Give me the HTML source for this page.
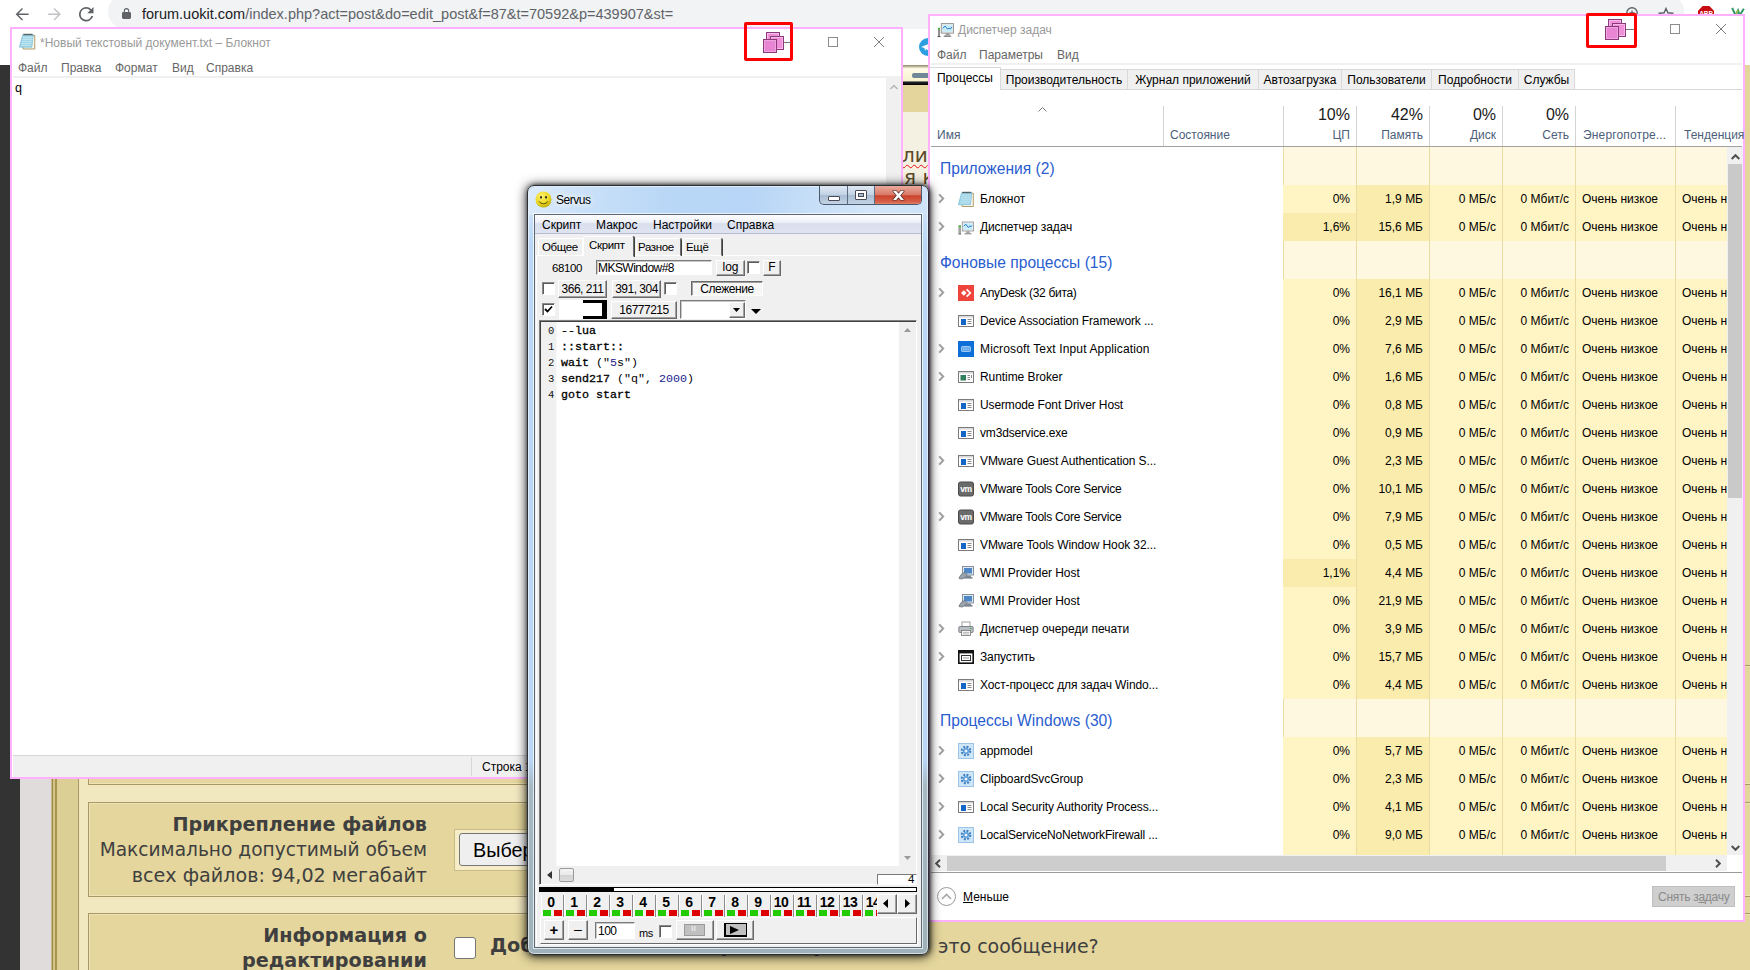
<!DOCTYPE html>
<html lang="ru"><head><meta charset="utf-8"><title>screenshot</title>
<style>
html,body{margin:0;padding:0}
body{width:1750px;height:970px;position:relative;overflow:hidden;background:#e3d59b;font-family:"Liberation Sans",sans-serif;font-size:12px;color:#000}
div,span,svg{position:absolute;box-sizing:border-box}
span{white-space:pre}
/* ---- chrome page ---- */
#ctb{left:0;top:0;width:1750px;height:65px;background:#fff}
#pill{left:108px;top:-6px;width:1576px;height:35px;border-radius:18px;background:#f1f3f4}
#url{left:142px;top:5px;font-size:14.5px;line-height:18px;color:#5f6368}
#url b{font-weight:normal;color:#202124}
#ldark{left:0;top:65px;width:20px;height:905px;background:#333}
#lgray{left:20px;top:65px;width:32px;height:905px;background:#e0dcdc}
#forum{left:52px;top:65px;width:1698px;height:905px;background:#e3d59b}
.fx{font-family:"DejaVu Sans","Liberation Sans",sans-serif;color:#3f3f3f}
.box{background:#e4d69c;border:1px solid #a89868;box-shadow:inset 0 0 0 1px #efe3b6}
/* ---- generic win10 window ---- */
.w10{background:#fff;border:2px solid #ffb1ff}
.w10 .ttl{font-size:12px;color:#999;line-height:14px}
.w10 .mi{font-size:12px;color:#666;line-height:14px}
/* ---- task manager ---- */
#tm .tab{top:53px;height:21px;border:1px solid #d9d9d9;border-left:none;background:#f0f0f0;font-size:12px;line-height:20px;text-align:center;color:#000}
#tm .hl{font-size:12px;line-height:14px;color:#4c607a}
#tm .hp{font-size:16px;line-height:18px;color:#1a1a1a;text-align:right}
#tm .vs{top:90px;width:1px;height:40px;background:#d4d4d4}
#list{left:0;top:131px;width:797px;height:708px;overflow:hidden;background:#fff}
#list .colbg{top:0;height:708px}
.row{left:0;width:797px;height:28px}
.grp{left:0;width:797px}
.grp span{left:10px;bottom:6px;font-size:15.600px;line-height:20px;color:#2a5dd0}
.row .chev{left:8px;top:8px;width:7px;height:11px}
.row .ic{left:28px;top:6px;width:16px;height:16px}
.row .nm{left:50px;top:7px;line-height:14px;font-size:12px}
.row .c{top:0;height:28px;line-height:28px;font-size:12px;text-align:right;padding-right:6px}
.row .cpu{left:353px;width:73px;background:#fff4c4}
.row .cpu.hot{background:#f9ecac}
.row .mem{left:427px;width:72px;background:#f9ecac}
.row .dsk{left:500px;width:72px;background:#fff4c4}
.row .net{left:573px;width:72px;background:#fff4c4}
.row .pw{left:646px;width:99px;background:#fff4c4;text-align:left;padding-left:6px}
.row .pt{left:746px;width:51px;background:#fff4c4;text-align:left;padding-left:6px}
/* ---- servus ---- */
#sv{font-family:"Liberation Sans",sans-serif;font-size:12px}
.btn{background:#f0f0f0;border:1px solid;border-color:#fff #6a6a6a #6a6a6a #fff;box-shadow:inset -1px -1px 0 #a0a0a0;text-align:center;font-size:12px;line-height:14px}
.cb{width:13px;height:13px;background:#fff;border:1px solid;border-color:#8a8a8a #fff #fff #8a8a8a;box-shadow:inset 1px 1px 0 #5a5a5a}
.edit{background:#fff;border:1px solid;border-color:#7a7a7a #fff #fff #7a7a7a;box-shadow:inset 1px 1px 0 #c8c8c8}
.code{font-family:"Liberation Mono",monospace;font-size:11.670px;line-height:15px;color:#000;-webkit-text-stroke:.3px #000}
.code em{font-style:normal;-webkit-text-stroke:0}
.code i{font-style:normal;color:#1a1a8c;-webkit-text-stroke:0}

</style></head>
<body>
<!-- ======== browser (background) ======== -->
<div id="ctb">
  <div id="pill"></div>
  <svg style="left:15px;top:7px;width:14.500px;height:14.500px" viewBox="0 0 16 16"><path d="M15 7.200H3.800l5-5L7.700 1 .7 8l7 7 1.100-1.100-5-5.100H15z" fill="#5f6368"/></svg>
  <svg style="left:47px;top:7px;width:14.500px;height:14.500px" viewBox="0 0 16 16"><path d="M1 7.200h11.200l-5-5L8.300 1l7 7-7 7-1.100-1.100 5-5.100H1z" fill="#c1c3c6"/></svg>
  <svg style="left:79px;top:7px;width:14.500px;height:14.500px" viewBox="0 0 16 16"><path d="M13.600 2.400A7.900 7.900 0 0 0 8 0a8 8 0 1 0 7.700 10h-2.100A6 6 0 1 1 8 2c1.700 0 3.100.7 4.200 1.800L9 7h7V0z" fill="#5f6368"/></svg>
  <svg style="left:121.500px;top:8px;width:9px;height:11px" viewBox="0 0 10 12"><path d="M8.500 4.200H8V3a3 3 0 0 0-6 0v1.200h-.5C.7 4.200 0 4.900 0 5.700v4.800C0 11.300.7 12 1.500 12h7c.8 0 1.500-.7 1.500-1.500V5.700c0-.8-.7-1.500-1.500-1.500zM3.200 3a1.800 1.800 0 0 1 3.600 0v1.200H3.200z" fill="#5f6368"/></svg>
  <span id="url"><b>forum.uokit.com</b>/index.php?act=post&amp;do=edit_post&amp;f=87&amp;t=70592&amp;p=439907&amp;st=</span>
  <svg style="left:1624px;top:5px;width:16px;height:16px" viewBox="0 0 16 16"><circle cx="8" cy="8" r="5.200" fill="none" stroke="#5f6368" stroke-width="1.400"/><path d="M5.500 8h5M8 5.500v5" stroke="#5f6368" stroke-width="1.300"/></svg>
  <svg style="left:1657px;top:6px;width:18px;height:18px" viewBox="0 0 18 18"><path d="M9 2.500l1.900 4.300 4.600.4-3.500 3 1.100 4.500L9 12.300l-4.100 2.400 1.100-4.500-3.500-3 4.600-.4z" fill="none" stroke="#5f6368" stroke-width="1.400"/></svg>
  <svg style="left:1698px;top:6px;width:16px;height:16px" viewBox="0 0 16 16"><path d="M4.700 0h6.600L16 4.700v6.600L11.300 16H4.700L0 11.300V4.700z" fill="#c70d12"/><text x="8" y="10" font-family="Liberation Sans,sans-serif" font-weight="bold" font-size="6.500" fill="#fff" text-anchor="middle">ABP</text></svg>
  <svg style="left:1731px;top:7px;width:14px;height:10px" viewBox="0 0 16 12"><path d="M1 1l4 9 3-6 2 6 5-8" fill="none" stroke="#2e9a63" stroke-width="2.400"/><path d="M5 10l3-6" stroke="#b3c23a" stroke-width="1.500"/></svg>
  <!-- telegram-ish circle in the gap -->
  <div style="left:919px;top:38px;width:18px;height:18px;border-radius:9px;background:#2b9fe0"></div>
  <svg style="left:921px;top:42px;width:10px;height:10px" viewBox="0 0 10 10"><path d="M0 5L10 1 8 9 5 7 4 9 3.500 6z" fill="#fff"/></svg>
</div>
<div id="ldark"></div>
<div id="lgray"></div>
<div style="left:51px;top:65px;width:1px;height:905px;background:#c4b88f"></div>
<div id="forum">
  <!-- left frame -->
  <div style="left:0;top:0;width:5px;height:905px;background:linear-gradient(90deg,#a08a40 0,#a08a40 1px,#d2c488 1px,#d2c488 3px,#a8954e 3px,#a8954e 5px)"></div>
  <div style="left:5px;top:0;width:21px;height:905px;background:#dccf96"></div>
  <div style="left:26px;top:0;width:1px;height:905px;background:#a89868"></div>
  <div style="left:27px;top:0;width:1671px;height:905px;background:#f2e8c0"></div>
  <!-- gap strip between windows (x 903..928) -->
  <div style="left:840px;top:0;width:50px;height:47px;background:#e3d59b"></div>
  <div style="left:851px;top:0;width:30px;height:20px;background:linear-gradient(#8d8466 0,#fdfbe6 18%,#f8f3cf 78%,#222 86%,#000 100%)"></div>
  <div style="left:860px;top:8px;width:20px;height:5px;background:#6f8797;border-radius:2px"></div>
  <div style="left:876px;top:2px;width:4px;height:4px;background:#e0203a;border-radius:2px"></div>
  <div style="left:840px;top:47px;width:50px;height:90px;background:#f4f0e2"></div>
  <span class="fx" style="left:850px;top:78px;font-size:20px;line-height:24px;color:#5b4a26;text-decoration:underline wavy #e11;text-underline-offset:2px;text-decoration-thickness:1.200px">ли</span>
  <span class="fx" style="left:852px;top:100px;font-size:20px;line-height:24px;color:#5b4a26">я к</span>
  <div style="left:1693px;top:0;width:5px;height:905px;background:#e3d59b"></div>
  <!-- boxes -->
  <div class="box" style="left:36px;top:600px;width:1700px;height:120px"></div>
  <div class="box" style="left:36px;top:737px;width:1700px;height:95px"></div>
  <div class="box" style="left:36px;top:848px;width:1700px;height:80px"></div>
  <span class="fx" style="right:1323px;top:748px;font-size:19.200px;line-height:24px;font-weight:bold">Прикрепление файлов</span>
  <span class="fx" style="right:1323px;top:773px;font-size:18.600px;line-height:24px">Максимально допустимый объем</span>
  <span class="fx" style="right:1323px;top:799px;font-size:19.150px;line-height:24px">всех файлов: 94,02 мегабайт</span>
  <span class="fx" style="right:1323px;top:859px;font-size:19.200px;line-height:24px;font-weight:bold">Информация о</span>
  <span class="fx" style="right:1323px;top:884px;font-size:19.200px;line-height:24px;font-weight:bold">редактировании</span>
  <!-- file chooser -->
  <div style="left:402px;top:764px;width:200px;height:42px;background:#f6edc8;border:1px solid #c9bb86"></div>
  <div style="left:407px;top:768px;width:160px;height:33px;background:#efefef;border:1px solid #767676;border-radius:3px"></div>
  <span style="left:421px;top:773px;font-size:19.800px;line-height:24px;color:#000">Выберите файл</span>
  <div style="left:402px;top:872px;width:22px;height:22px;background:#fff;border:1px solid #767676;border-radius:3px"></div>
  <span class="fx" style="left:438px;top:869px;font-size:19.200px;line-height:24px;font-weight:bold">Добавить запись "Отредактировал" в</span>
  <span class="fx" style="left:886px;top:869px;font-size:19px;line-height:24px">это сообщение?</span>
</div>
<!-- ======== Notepad ======== -->
<div id="np" class="w10" style="left:10px;top:27px;width:893px;height:752px">
  <!-- inner origin = (12,29) -->
  <svg style="left:7px;top:4px;width:16.500px;height:16.500px" viewBox="0 0 16 16"><path d="M4.300 2.200h11v13.300H4z" fill="#fbf8ee" stroke="#a8935e" stroke-width=".9"/><path d="M3.600 1.800h10.200l-1.300 11.900H.4z" fill="#9fd6e8" stroke="#6db4cf" stroke-width=".6"/><path d="M3.500 4.200h9.800M3.200 6.200h9.800M2.900 8.200h9.800M2.600 10.200h9.800M2.300 12.200h9.800" stroke="#c9e9f3" stroke-width=".8"/><path d="M4.300.800l.8 1.300.8-1.300.8 1.300.8-1.300.8 1.300.8-1.300.8 1.300.8-1.300.8 1.300.8-1.300.8 1.300" fill="none" stroke="#333" stroke-width=".7"/></svg>
  <span class="ttl" style="left:28px;top:7px">*Новый текстовый документ.txt – Блокнот</span>
  <!-- caption buttons -->
  <div style="left:816px;top:8px;width:10px;height:10px;border:1px solid #8c8c8c"></div>
  <svg style="left:862px;top:8px;width:10px;height:10px" viewBox="0 0 10 10"><path d="M0 0l10 10M10 0L0 10" stroke="#7c7c7c" stroke-width="1"/></svg>
  <!-- red highlight -->
  <div style="left:732px;top:-7px;width:49px;height:39px;border:3px solid #f00;border-radius:2px"></div>
  <div style="left:772px;top:13px;width:7px;height:1px;background:#777"></div>
  <div style="left:754px;top:3px;width:14px;height:14px;background:#ee8fd8;border:1px solid #8a3a7a;box-shadow:inset 0 0 0 1px #f6b9ea"></div>
  <div style="left:758px;top:7px;width:14px;height:14px;background:#ee8fd8;border:1px solid #8a3a7a;box-shadow:inset 0 0 0 1px #f6b9ea"></div>
  <div style="left:751px;top:10px;width:14px;height:14px;background:#e886d3;border:1px solid #8a3a7a;box-shadow:inset 0 0 0 1px #f0a5e0"></div>
  <!-- menu -->
  <span class="mi" style="left:6px;top:32px">Файл</span>
  <span class="mi" style="left:49px;top:32px">Правка</span>
  <span class="mi" style="left:103px;top:32px">Формат</span>
  <span class="mi" style="left:160px;top:32px">Вид</span>
  <span class="mi" style="left:194px;top:32px">Справка</span>
  <div style="left:1px;top:47px;width:888px;height:2px;background:#f0f0f0"></div>
  <!-- text -->
  <span style="left:3px;top:52px;font-family:'Liberation Sans',sans-serif;font-size:12.500px;line-height:14px;color:#000">q</span>
  <!-- scrollbar -->
  <div style="left:874px;top:49px;width:15px;height:677px;background:#f0f0f0"></div>
  <svg style="left:878px;top:55px;width:8px;height:6px" viewBox="0 0 8 6"><path d="M.500 5L4 1.500 7.500 5" fill="none" stroke="#b5b5b5" stroke-width="1.500"/></svg>
  <!-- status bar -->
  <div style="left:1px;top:726px;width:888px;height:1px;background:#d7d7d7"></div>
  <div style="left:1px;top:727px;width:888px;height:21px;background:#f0f0f0"></div>
  <div style="left:459px;top:728px;width:1px;height:19px;background:#d7d7d7"></div>
  <span style="left:470px;top:731px;font-size:12px;line-height:14px;color:#000">Строка 1, столбец 2</span>
</div>
<!-- ======== Task Manager ======== -->
<div id="tm" class="w10" style="left:928px;top:14px;width:817px;height:908px">
  <!-- inner origin = (930,16) -->
  <svg style="left:7px;top:6px;width:17px;height:17px" viewBox="0 0 16 16"><rect x="4" y="1.500" width="11.500" height="9" fill="#e8e8e8" stroke="#8a8a8a" stroke-width=".8"/><rect x="5.200" y="2.700" width="9.100" height="6.600" fill="#c9ecfa"/><path d="M5.500 6l2-2.200 2.500 3 1.300-1.200 1.200 1 1.700-2" stroke="#1f78c8" stroke-width=".9" fill="none"/><path d="M8.500 10.500h3l.8 2.300h-4.600z" fill="#9a9a9a"/><rect x="6.300" y="12.800" width="7" height="1.200" fill="#7a7a7a"/><rect x="1" y="5.500" width="1.800" height="8" fill="#8c8c8c"/><rect x="1" y="5.500" width="1.800" height="1.600" fill="#3fc020"/><rect x=".5" y="13.200" width="2.800" height="1" fill="#555"/></svg>
  <span class="ttl" style="left:28px;top:7px">Диспетчер задач</span>
  <div style="left:740px;top:8px;width:10px;height:10px;border:1px solid #8c8c8c"></div>
  <svg style="left:786px;top:8px;width:10px;height:10px" viewBox="0 0 10 10"><path d="M0 0l10 10M10 0L0 10" stroke="#7c7c7c" stroke-width="1"/></svg>
  <div style="left:656px;top:-3px;width:51px;height:35px;border:3px solid #f00;border-radius:2px"></div>
  <div style="left:696px;top:13px;width:8px;height:1px;background:#777"></div>
  <div style="left:678px;top:3px;width:14px;height:14px;background:#ee8fd8;border:1px solid #8a3a7a;box-shadow:inset 0 0 0 1px #f6b9ea"></div>
  <div style="left:682px;top:7px;width:14px;height:14px;background:#ee8fd8;border:1px solid #8a3a7a;box-shadow:inset 0 0 0 1px #f6b9ea"></div>
  <div style="left:675px;top:10px;width:14px;height:14px;background:#e886d3;border:1px solid #8a3a7a;box-shadow:inset 0 0 0 1px #f0a5e0"></div>
  <!-- menu -->
  <span class="mi" style="left:7px;top:32px">Файл</span>
  <span class="mi" style="left:49px;top:32px">Параметры</span>
  <span class="mi" style="left:127px;top:32px">Вид</span>
  <div style="left:1px;top:47px;width:811px;height:2px;background:#f0f0f0"></div>
  <!-- tabs -->
  <div style="left:1px;top:73px;width:811px;height:1px;background:#d9d9d9"></div>
  <div class="tab" style="left:71px;width:127px">Производительность</div>
  <div class="tab" style="left:198px;width:131px">Журнал приложений</div>
  <div class="tab" style="left:329px;width:83px">Автозагрузка</div>
  <div class="tab" style="left:412px;width:90px">Пользователи</div>
  <div class="tab" style="left:502px;width:87px">Подробности</div>
  <div class="tab" style="left:589px;width:56px">Службы</div>
  <div class="tab" style="left:0px;top:51px;width:71px;height:23px;background:#fff;border-left:none;border-bottom:none;line-height:21px">Процессы</div>
  <!-- header -->
  <svg style="left:108px;top:91px;width:9px;height:5px" viewBox="0 0 9 5"><path d="M.500 4.500l4-4 4 4" fill="none" stroke="#7a7a7a" stroke-width="1"/></svg>
  <span class="hl" style="left:7px;top:112px">Имя</span>
  <span class="hl" style="left:240px;top:112px">Состояние</span>
  <div class="vs" style="left:233px"></div><div class="vs" style="left:353px"></div><div class="vs" style="left:426px"></div><div class="vs" style="left:499px"></div><div class="vs" style="left:572px"></div><div class="vs" style="left:645px"></div><div class="vs" style="left:745px"></div>
  <span class="hp" style="right:393px;top:90px">10%</span><span class="hl" style="right:393px;top:112px">ЦП</span>
  <span class="hp" style="right:320px;top:90px">42%</span><span class="hl" style="right:320px;top:112px">Память</span>
  <span class="hp" style="right:247px;top:90px">0%</span><span class="hl" style="right:247px;top:112px">Диск</span>
  <span class="hp" style="right:174px;top:90px">0%</span><span class="hl" style="right:174px;top:112px">Сеть</span>
  <span class="hl" style="left:653px;top:112px;letter-spacing:.15px">Энергопотре...</span>
  <span class="hl" style="left:754px;top:112px">Тенденция</span>
  <div style="left:1px;top:130px;width:811px;height:1px;background:#a0a0a0"></div>
  <!-- list -->
  <div id="list">
    <div class="colbg" style="left:353px;width:444px;background:#fff8e1"></div>
    <div class="colbg" style="left:353px;width:1px;background:#eadba4"></div>
    <div class="colbg" style="left:426px;width:1px;background:#eadba4"></div>
    <div class="colbg" style="left:499px;width:1px;background:#eadba4"></div>
    <div class="colbg" style="left:572px;width:1px;background:#eadba4"></div>
    <div class="colbg" style="left:645px;width:1px;background:#eadba4"></div>
    <div class="colbg" style="left:745px;width:1px;background:#eadba4"></div>
<div class="grp" style="top:0px;height:38px"><span>Приложения (2)</span></div>
<div class="row" style="top:38px"><svg class="chev" viewBox="0 0 8 12"><path d="M1.300 1.300L6 6 1.300 10.700" fill="none" stroke="#9e9e9e" stroke-width="2.200"/></svg><svg class="ic" viewBox="0 0 16 16"><path d="M4.300 2.200h11v13.300H4z" fill="#fbf8ee" stroke="#a8935e" stroke-width=".9"/><path d="M3.600 1.800h10.200l-1.300 11.900H.4z" fill="#9fd6e8" stroke="#6db4cf" stroke-width=".6"/><path d="M3.500 4.200h9.800M3.200 6.200h9.800M2.900 8.200h9.800M2.600 10.200h9.800M2.300 12.200h9.800" stroke="#c9e9f3" stroke-width=".8"/><path d="M4.300.800l.8 1.300.8-1.300.8 1.300.8-1.300.8 1.300.8-1.300.8 1.300.8-1.300.8 1.300.8-1.300.8 1.300" fill="none" stroke="#333" stroke-width=".7"/></svg><span class="nm">Блокнот</span><span class="c cpu">0%</span><span class="c mem">1,9 МБ</span><span class="c dsk">0 МБ/с</span><span class="c net">0 Мбит/с</span><span class="c pw">Очень низкое</span><span class="c pt">Очень н</span></div>
<div class="row" style="top:66px"><svg class="chev" viewBox="0 0 8 12"><path d="M1.300 1.300L6 6 1.300 10.700" fill="none" stroke="#9e9e9e" stroke-width="2.200"/></svg><svg class="ic" viewBox="0 0 16 16"><rect x="4.300" y="3" width="11.200" height="9" fill="#ececec" stroke="#9b9b9b" stroke-width=".9"/><rect x="5.500" y="4.200" width="8.800" height="6.600" fill="#c9ecfa"/><path d="M5.800 7.200l1.900-2 2.600 3.200 1.600-1.500 1.200.8 1-1.200" stroke="#1f78c8" stroke-width="1" fill="none"/><path d="M8.700 12h2.500l.9 2.200H7.800z" fill="#a8a8a8"/><rect x="6.500" y="14.200" width="7" height="1.100" fill="#8a8a8a"/><rect x=".8" y="6.500" width="2" height="8.300" fill="#a5a5a5" stroke="#8a8a8a" stroke-width=".4"/><rect x="1" y="6.600" width="1.700" height="1.600" fill="#2fd01a"/><rect x=".5" y="14.600" width="2.700" height=".9" fill="#666"/></svg><span class="nm" style="letter-spacing:-0.12px">Диспетчер задач</span><span class="c cpu hot">1,6%</span><span class="c mem">15,6 МБ</span><span class="c dsk">0 МБ/с</span><span class="c net">0 Мбит/с</span><span class="c pw">Очень низкое</span><span class="c pt">Очень н</span></div>
<div class="grp" style="top:94px;height:38px"><span>Фоновые процессы (15)</span></div>
<div class="row" style="top:132px"><svg class="chev" viewBox="0 0 8 12"><path d="M1.300 1.300L6 6 1.300 10.700" fill="none" stroke="#9e9e9e" stroke-width="2.200"/></svg><svg class="ic" viewBox="0 0 16 16"><rect width="16" height="16" fill="#ef443b"/><path d="M5.800 5.200L8.600 8 5.800 10.800 3 8z" fill="#fff"/><path d="M8.600 4.300L12.300 8l-3.700 3.700" fill="none" stroke="#fff" stroke-width="1.700"/></svg><span class="nm" style="letter-spacing:-0.30px">AnyDesk (32 бита)</span><span class="c cpu">0%</span><span class="c mem">16,1 МБ</span><span class="c dsk">0 МБ/с</span><span class="c net">0 Мбит/с</span><span class="c pw">Очень низкое</span><span class="c pt">Очень н</span></div>
<div class="row" style="top:160px"><svg class="ic" viewBox="0 0 16 16"><rect x=".5" y="2.5" width="15" height="11" fill="#fff" stroke="#7b7b7b"/><rect x="1" y="3" width="14" height="1.6" fill="#d9d9d9"/><rect x="3" y="6" width="5" height="6" fill="#1565c8"/><path d="M9.5 6.5h4M9.5 8.5h4M9.5 10.5h4" stroke="#8a8a8a" stroke-width="1"/></svg><span class="nm" style="letter-spacing:-0.12px">Device Association Framework ...</span><span class="c cpu">0%</span><span class="c mem">2,9 МБ</span><span class="c dsk">0 МБ/с</span><span class="c net">0 Мбит/с</span><span class="c pw">Очень низкое</span><span class="c pt">Очень н</span></div>
<div class="row" style="top:188px"><svg class="chev" viewBox="0 0 8 12"><path d="M1.300 1.300L6 6 1.300 10.700" fill="none" stroke="#9e9e9e" stroke-width="2.200"/></svg><svg class="ic" viewBox="0 0 16 16"><rect width="16" height="16" fill="#0f6fd8"/><rect x="3.5" y="5.5" width="9" height="5" rx=".8" fill="#5aa4ec" stroke="#cfe4fa" stroke-width=".7"/><path d="M5 7h6M5 8.6h6" stroke="#cfe4fa" stroke-width=".6" stroke-dasharray="1 .6"/></svg><span class="nm" style="letter-spacing:0.14px">Microsoft Text Input Application</span><span class="c cpu">0%</span><span class="c mem">7,6 МБ</span><span class="c dsk">0 МБ/с</span><span class="c net">0 Мбит/с</span><span class="c pw">Очень низкое</span><span class="c pt">Очень н</span></div>
<div class="row" style="top:216px"><svg class="chev" viewBox="0 0 8 12"><path d="M1.300 1.300L6 6 1.300 10.700" fill="none" stroke="#9e9e9e" stroke-width="2.200"/></svg><svg class="ic" viewBox="0 0 16 16"><rect x=".5" y="2.5" width="15" height="11" fill="#fff" stroke="#7b7b7b"/><rect x="1" y="3" width="14" height="1.6" fill="#d9d9d9"/><rect x="2.5" y="6" width="5.5" height="5.5" fill="#2e7d5b"/><path d="M9.5 6.5h2.5M9.5 8.5h2.5M9.5 10.5h2.5M13.5 6v3" stroke="#8a8a8a" stroke-width="1"/></svg><span class="nm" style="letter-spacing:-0.07px">Runtime Broker</span><span class="c cpu">0%</span><span class="c mem">1,6 МБ</span><span class="c dsk">0 МБ/с</span><span class="c net">0 Мбит/с</span><span class="c pw">Очень низкое</span><span class="c pt">Очень н</span></div>
<div class="row" style="top:244px"><svg class="ic" viewBox="0 0 16 16"><rect x=".5" y="2.5" width="15" height="11" fill="#fff" stroke="#7b7b7b"/><rect x="1" y="3" width="14" height="1.6" fill="#d9d9d9"/><rect x="3" y="6" width="5" height="6" fill="#1565c8"/><path d="M9.5 6.5h4M9.5 8.5h4M9.5 10.5h4" stroke="#8a8a8a" stroke-width="1"/></svg><span class="nm" style="letter-spacing:-0.12px">Usermode Font Driver Host</span><span class="c cpu">0%</span><span class="c mem">0,8 МБ</span><span class="c dsk">0 МБ/с</span><span class="c net">0 Мбит/с</span><span class="c pw">Очень низкое</span><span class="c pt">Очень н</span></div>
<div class="row" style="top:272px"><svg class="ic" viewBox="0 0 16 16"><rect x=".5" y="2.5" width="15" height="11" fill="#fff" stroke="#7b7b7b"/><rect x="1" y="3" width="14" height="1.6" fill="#d9d9d9"/><rect x="3" y="6" width="5" height="6" fill="#1565c8"/><path d="M9.5 6.5h4M9.5 8.5h4M9.5 10.5h4" stroke="#8a8a8a" stroke-width="1"/></svg><span class="nm" style="letter-spacing:-0.17px">vm3dservice.exe</span><span class="c cpu">0%</span><span class="c mem">0,9 МБ</span><span class="c dsk">0 МБ/с</span><span class="c net">0 Мбит/с</span><span class="c pw">Очень низкое</span><span class="c pt">Очень н</span></div>
<div class="row" style="top:300px"><svg class="chev" viewBox="0 0 8 12"><path d="M1.300 1.300L6 6 1.300 10.700" fill="none" stroke="#9e9e9e" stroke-width="2.200"/></svg><svg class="ic" viewBox="0 0 16 16"><rect x=".5" y="2.5" width="15" height="11" fill="#fff" stroke="#7b7b7b"/><rect x="1" y="3" width="14" height="1.6" fill="#d9d9d9"/><rect x="3" y="6" width="5" height="6" fill="#1565c8"/><path d="M9.5 6.5h4M9.5 8.5h4M9.5 10.5h4" stroke="#8a8a8a" stroke-width="1"/></svg><span class="nm" style="letter-spacing:-0.10px">VMware Guest Authentication S...</span><span class="c cpu">0%</span><span class="c mem">2,3 МБ</span><span class="c dsk">0 МБ/с</span><span class="c net">0 Мбит/с</span><span class="c pw">Очень низкое</span><span class="c pt">Очень н</span></div>
<div class="row" style="top:328px"><svg class="ic" viewBox="0 0 16 16"><rect x=".5" y="1" width="15" height="14" rx="2" fill="#6b6b6b" stroke="#4a4a4a"/><text x="8" y="10.800" font-family="Liberation Sans,sans-serif" font-weight="bold" font-size="8.500" fill="#fff" text-anchor="middle" letter-spacing="-.5">vm</text></svg><span class="nm" style="letter-spacing:-0.26px">VMware Tools Core Service</span><span class="c cpu">0%</span><span class="c mem">10,1 МБ</span><span class="c dsk">0 МБ/с</span><span class="c net">0 Мбит/с</span><span class="c pw">Очень низкое</span><span class="c pt">Очень н</span></div>
<div class="row" style="top:356px"><svg class="chev" viewBox="0 0 8 12"><path d="M1.300 1.300L6 6 1.300 10.700" fill="none" stroke="#9e9e9e" stroke-width="2.200"/></svg><svg class="ic" viewBox="0 0 16 16"><rect x=".5" y="1" width="15" height="14" rx="2" fill="#6b6b6b" stroke="#4a4a4a"/><text x="8" y="10.800" font-family="Liberation Sans,sans-serif" font-weight="bold" font-size="8.500" fill="#fff" text-anchor="middle" letter-spacing="-.5">vm</text></svg><span class="nm" style="letter-spacing:-0.26px">VMware Tools Core Service</span><span class="c cpu">0%</span><span class="c mem">7,9 МБ</span><span class="c dsk">0 МБ/с</span><span class="c net">0 Мбит/с</span><span class="c pw">Очень низкое</span><span class="c pt">Очень н</span></div>
<div class="row" style="top:384px"><svg class="ic" viewBox="0 0 16 16"><rect x=".5" y="2.5" width="15" height="11" fill="#fff" stroke="#7b7b7b"/><rect x="1" y="3" width="14" height="1.6" fill="#d9d9d9"/><rect x="3" y="6" width="5" height="6" fill="#1565c8"/><path d="M9.5 6.5h4M9.5 8.5h4M9.5 10.5h4" stroke="#8a8a8a" stroke-width="1"/></svg><span class="nm" style="letter-spacing:-0.10px">VMware Tools Window Hook 32...</span><span class="c cpu">0%</span><span class="c mem">0,5 МБ</span><span class="c dsk">0 МБ/с</span><span class="c net">0 Мбит/с</span><span class="c pw">Очень низкое</span><span class="c pt">Очень н</span></div>
<div class="row" style="top:412px"><svg class="ic" viewBox="0 0 16 16"><rect x="4.5" y="1.5" width="11" height="8.5" fill="#dfe9f2" stroke="#7c8894" stroke-width=".9"/><rect x="6" y="3" width="8" height="5.5" fill="#4f86c6"/><path d="M1 13.5c1-3.5 3-5.5 6-6l2 2c-1 2.500-3 4-5 4.500z" fill="#9aa3ad" stroke="#5e6670" stroke-width=".7"/><rect x="8" y="10.500" width="5" height="1.500" fill="#7c8894"/><rect x="6.500" y="12.200" width="8" height="1.300" fill="#5e6670"/></svg><span class="nm" style="letter-spacing:-0.06px">WMI Provider Host</span><span class="c cpu hot">1,1%</span><span class="c mem">4,4 МБ</span><span class="c dsk">0 МБ/с</span><span class="c net">0 Мбит/с</span><span class="c pw">Очень низкое</span><span class="c pt">Очень н</span></div>
<div class="row" style="top:440px"><svg class="ic" viewBox="0 0 16 16"><rect x="4.5" y="1.5" width="11" height="8.5" fill="#dfe9f2" stroke="#7c8894" stroke-width=".9"/><rect x="6" y="3" width="8" height="5.5" fill="#4f86c6"/><path d="M1 13.5c1-3.5 3-5.5 6-6l2 2c-1 2.500-3 4-5 4.500z" fill="#9aa3ad" stroke="#5e6670" stroke-width=".7"/><rect x="8" y="10.500" width="5" height="1.500" fill="#7c8894"/><rect x="6.500" y="12.200" width="8" height="1.300" fill="#5e6670"/></svg><span class="nm" style="letter-spacing:-0.06px">WMI Provider Host</span><span class="c cpu">0%</span><span class="c mem">21,9 МБ</span><span class="c dsk">0 МБ/с</span><span class="c net">0 Мбит/с</span><span class="c pw">Очень низкое</span><span class="c pt">Очень н</span></div>
<div class="row" style="top:468px"><svg class="chev" viewBox="0 0 8 12"><path d="M1.300 1.300L6 6 1.300 10.700" fill="none" stroke="#9e9e9e" stroke-width="2.200"/></svg><svg class="ic" viewBox="0 0 16 16"><rect x="4" y="1" width="8" height="5" fill="#fff" stroke="#888" stroke-width=".8"/><rect x=".8" y="5.500" width="14.400" height="6" rx="1" fill="#b9bec4" stroke="#6d7278" stroke-width=".8"/><rect x="3.500" y="9.500" width="9" height="5" fill="#f4f4f4" stroke="#777" stroke-width=".8"/><path d="M5 11.500h6M5 13h6" stroke="#999" stroke-width=".6"/><rect x="12" y="7" width="1.600" height="1" fill="#35b035"/></svg><span class="nm">Диспетчер очереди печати</span><span class="c cpu">0%</span><span class="c mem">3,9 МБ</span><span class="c dsk">0 МБ/с</span><span class="c net">0 Мбит/с</span><span class="c pw">Очень низкое</span><span class="c pt">Очень н</span></div>
<div class="row" style="top:496px"><svg class="chev" viewBox="0 0 8 12"><path d="M1.300 1.300L6 6 1.300 10.700" fill="none" stroke="#9e9e9e" stroke-width="2.200"/></svg><svg class="ic" viewBox="0 0 16 16"><rect x=".8" y="1.800" width="14.400" height="12.400" fill="#fff" stroke="#111" stroke-width="1.600"/><rect x="1" y="2" width="14" height="2.400" fill="#111"/><rect x="3.500" y="6.500" width="9" height="5" fill="none" stroke="#333" stroke-width="1"/><path d="M5 9h6" stroke="#777" stroke-width=".8"/></svg><span class="nm" style="letter-spacing:-0.14px">Запустить</span><span class="c cpu">0%</span><span class="c mem">15,7 МБ</span><span class="c dsk">0 МБ/с</span><span class="c net">0 Мбит/с</span><span class="c pw">Очень низкое</span><span class="c pt">Очень н</span></div>
<div class="row" style="top:524px"><svg class="ic" viewBox="0 0 16 16"><rect x=".5" y="2.5" width="15" height="11" fill="#fff" stroke="#7b7b7b"/><rect x="1" y="3" width="14" height="1.6" fill="#d9d9d9"/><rect x="3" y="6" width="5" height="6" fill="#1565c8"/><path d="M9.5 6.5h4M9.5 8.5h4M9.5 10.5h4" stroke="#8a8a8a" stroke-width="1"/></svg><span class="nm" style="letter-spacing:-0.11px">Хост-процесс для задач Windo...</span><span class="c cpu">0%</span><span class="c mem">4,4 МБ</span><span class="c dsk">0 МБ/с</span><span class="c net">0 Мбит/с</span><span class="c pw">Очень низкое</span><span class="c pt">Очень н</span></div>
<div class="grp" style="top:552px;height:38px"><span>Процессы Windows (30)</span></div>
<div class="row" style="top:590px"><svg class="chev" viewBox="0 0 8 12"><path d="M1.300 1.300L6 6 1.300 10.700" fill="none" stroke="#9e9e9e" stroke-width="2.200"/></svg><svg class="ic" viewBox="0 0 16 16"><rect x=".5" y=".5" width="15" height="15" fill="#cfe6f8" stroke="#9cc4e6"/><circle cx="8" cy="8" r="4.200" fill="none" stroke="#3e7fc1" stroke-width="2.200" stroke-dasharray="1.900 1.400"/><circle cx="8" cy="8" r="3" fill="#5a9ad6"/><circle cx="8" cy="8" r="1.500" fill="#e8f3fc"/></svg><span class="nm">appmodel</span><span class="c cpu">0%</span><span class="c mem">5,7 МБ</span><span class="c dsk">0 МБ/с</span><span class="c net">0 Мбит/с</span><span class="c pw">Очень низкое</span><span class="c pt">Очень н</span></div>
<div class="row" style="top:618px"><svg class="chev" viewBox="0 0 8 12"><path d="M1.300 1.300L6 6 1.300 10.700" fill="none" stroke="#9e9e9e" stroke-width="2.200"/></svg><svg class="ic" viewBox="0 0 16 16"><rect x=".5" y=".5" width="15" height="15" fill="#cfe6f8" stroke="#9cc4e6"/><circle cx="8" cy="8" r="4.200" fill="none" stroke="#3e7fc1" stroke-width="2.200" stroke-dasharray="1.900 1.400"/><circle cx="8" cy="8" r="3" fill="#5a9ad6"/><circle cx="8" cy="8" r="1.500" fill="#e8f3fc"/></svg><span class="nm" style="letter-spacing:-0.10px">ClipboardSvcGroup</span><span class="c cpu">0%</span><span class="c mem">2,3 МБ</span><span class="c dsk">0 МБ/с</span><span class="c net">0 Мбит/с</span><span class="c pw">Очень низкое</span><span class="c pt">Очень н</span></div>
<div class="row" style="top:646px"><svg class="chev" viewBox="0 0 8 12"><path d="M1.300 1.300L6 6 1.300 10.700" fill="none" stroke="#9e9e9e" stroke-width="2.200"/></svg><svg class="ic" viewBox="0 0 16 16"><rect x=".5" y="2.5" width="15" height="11" fill="#fff" stroke="#7b7b7b"/><rect x="1" y="3" width="14" height="1.6" fill="#d9d9d9"/><rect x="3" y="6" width="5" height="6" fill="#1565c8"/><path d="M9.5 6.5h4M9.5 8.5h4M9.5 10.5h4" stroke="#8a8a8a" stroke-width="1"/></svg><span class="nm" style="letter-spacing:-0.11px">Local Security Authority Process...</span><span class="c cpu">0%</span><span class="c mem">4,1 МБ</span><span class="c dsk">0 МБ/с</span><span class="c net">0 Мбит/с</span><span class="c pw">Очень низкое</span><span class="c pt">Очень н</span></div>
<div class="row" style="top:674px"><svg class="chev" viewBox="0 0 8 12"><path d="M1.300 1.300L6 6 1.300 10.700" fill="none" stroke="#9e9e9e" stroke-width="2.200"/></svg><svg class="ic" viewBox="0 0 16 16"><rect x=".5" y=".5" width="15" height="15" fill="#cfe6f8" stroke="#9cc4e6"/><circle cx="8" cy="8" r="4.200" fill="none" stroke="#3e7fc1" stroke-width="2.200" stroke-dasharray="1.900 1.400"/><circle cx="8" cy="8" r="3" fill="#5a9ad6"/><circle cx="8" cy="8" r="1.500" fill="#e8f3fc"/></svg><span class="nm" style="letter-spacing:-0.15px">LocalServiceNoNetworkFirewall ...</span><span class="c cpu">0%</span><span class="c mem">9,0 МБ</span><span class="c dsk">0 МБ/с</span><span class="c net">0 Мбит/с</span><span class="c pw">Очень низкое</span><span class="c pt">Очень н</span></div>
<div class="row" style="top:702px"><span class="c cpu"></span><span class="c mem"></span><span class="c dsk"></span><span class="c net"></span><span class="c pw"></span><span class="c pt"></span></div>
  </div>
  <!-- v scrollbar -->
  <div style="left:797px;top:131px;width:16px;height:708px;background:#f0f0f0"></div>
  <div style="left:798px;top:148px;width:14px;height:334px;background:#c9c9c9"></div>
  <svg style="left:801px;top:138px;width:9px;height:6px" viewBox="0 0 9 6"><path d="M.700 5L4.500 1.200 8.300 5" fill="none" stroke="#505050" stroke-width="2"/></svg>
  <svg style="left:801px;top:829px;width:9px;height:6px" viewBox="0 0 9 6"><path d="M.700 1L4.500 4.800 8.300 1" fill="none" stroke="#505050" stroke-width="2"/></svg>
  <!-- h scrollbar -->
  <div style="left:1px;top:839px;width:796px;height:16px;background:#f0f0f0"></div>
  <div style="left:17px;top:840px;width:719px;height:15px;background:#cdcdcd"></div>
  <svg style="left:5px;top:843px;width:6px;height:9px" viewBox="0 0 6 9"><path d="M5 .700L1.200 4.500 5 8.300" fill="none" stroke="#505050" stroke-width="2"/></svg>
  <svg style="left:785px;top:843px;width:6px;height:9px" viewBox="0 0 6 9"><path d="M1 .700L4.800 4.500 1 8.300" fill="none" stroke="#505050" stroke-width="2"/></svg>
  <!-- footer -->
  <div style="left:1px;top:856px;width:811px;height:1px;background:#9a9a9a"></div>
  <div style="left:7px;top:871px;width:19px;height:19px;border:1px solid #9a9a9a;border-radius:10px"></div>
  <svg style="left:11px;top:877px;width:11px;height:7px" viewBox="0 0 11 7"><path d="M1 6L5.500 1.500 10 6" fill="none" stroke="#a8a8a8" stroke-width="1.600"/></svg>
  <span style="left:33px;top:874px;font-size:12px;line-height:14px"><u>М</u>еньше</span>
  <div style="left:722px;top:870px;width:83px;height:21px;background:#cfcfcf;border:1px solid #bfbfbf"></div>
  <span style="left:728px;top:874px;font-size:12px;line-height:14px;letter-spacing:-.28px;color:#8a8a8a">Снять з<u>а</u>дачу</span>
</div>
<!-- ======== Servus (Win7 aero) ======== -->
<div id="sv" style="left:527px;top:185px;width:402px;height:770px;border-radius:7px;background:linear-gradient(180deg,#bdd7f1 0,#c9e0f7 30px,#b9d6f5 60px,#b9d6f5 575px,#a7bac4 600px,#9fb1b9 100%);border:1px solid #2b2f36;box-shadow:0 0 0 1px rgba(255,255,255,.55) inset,0 1px 11px 1px rgba(0,0,0,.78),1px 0 4px 0 rgba(0,0,0,.7)">
<div style="left:1px;top:1px;width:398px;height:28px;border-radius:6px 6px 0 0;background:linear-gradient(100deg,#dcebfa 0,#c9e0f8 15%,#b9d7f6 35%,#b7d5f6 55%,#c6def7 70%,#d3e6f9 85%,#cfe3f8 100%)"></div>
<svg style="left:7px;top:5px;width:17px;height:17px" viewBox="0 0 17 17"><defs><radialGradient id="sg" cx=".4" cy=".3" r=".8"><stop offset="0" stop-color="#fff36a"/><stop offset=".6" stop-color="#e9d521"/><stop offset="1" stop-color="#b3a000"/></radialGradient></defs><circle cx="8.500" cy="8.500" r="8" fill="url(#sg)"/><ellipse cx="6" cy="6.300" rx=".9" ry="1.400" fill="#222"/><ellipse cx="11" cy="6.300" rx=".9" ry="1.400" fill="#222"/><path d="M4 10.300c2 3.200 7 3.200 9 0" fill="none" stroke="#4a3c00" stroke-width=".9"/></svg>
<span style="left:28px;top:7px;font-size:12px;line-height:15px;letter-spacing:-.45px;color:#000;text-shadow:0 0 6px #fff,0 0 6px #fff">Servus</span>
<div style="left:291px;top:0;width:103px;height:19px;border:1px solid #4a5a6e;border-top:none;border-radius:0 0 5px 5px;overflow:hidden;background:linear-gradient(#dfe9f4 0,#c3d3e4 48%,#a9bdd3 52%,#c2d3e4 100%)"><div style="left:27px;top:0;width:1px;height:19px;background:#5a6a80"></div><div style="left:54px;top:0;width:1px;height:19px;background:#5a6a80"></div><div style="left:55px;top:0;width:47px;height:19px;background:linear-gradient(#e9a99b 0,#d97a68 45%,#c9432b 52%,#d8604a 85%,#e89b80 100%)"></div><div style="left:8px;top:10px;width:12px;height:5px;background:#fff;border:1px solid #4a4a55;border-radius:1px"></div><div style="left:35px;top:4px;width:12px;height:10px;background:#fff;border:1px solid #4a4a55;border-radius:1px"></div><div style="left:38px;top:7px;width:6px;height:4px;background:#a9bdd3;border:1px solid #4a4a55"></div><svg style="left:72px;top:4px;width:13px;height:11px" viewBox="0 0 13 11"><path d="M1 1h3.200l2.300 2.700L8.800 1H12L8.200 5.500 12 10H8.800L6.500 7.300 4.200 10H1l3.800-4.500z" fill="#fff" stroke="#4a3030" stroke-width="1.2" paint-order="stroke" stroke-linejoin="round"/></svg></div>
<div id="svc" style="left:6px;top:28px;width:388px;height:734px;background:#f0f0f0;border:1px solid #5d6674;box-shadow:0 0 0 1px rgba(255,255,255,.7)">
<div style="left:0;top:0;width:386px;height:19px;background:linear-gradient(#fdfdfe 0,#eff1f8 40%,#dadfee 48%,#dfe3f1 100%);border-bottom:1px solid #b5bdd0"></div>
<span style="left:7px;top:3px;font-size:12px;line-height:15px">Скрипт</span>
<span style="left:61px;top:3px;font-size:12px;line-height:15px">Макрос</span>
<span style="left:118px;top:3px;font-size:12px;line-height:15px">Настройки</span>
<span style="left:192px;top:3px;font-size:12px;line-height:15px">Справка</span>
<div style="left:1px;top:40px;width:385px;height:691px;border-top:1px solid #fff;border-left:1px solid #fff"></div>
<div style="left:3px;top:23px;width:45px;height:18px;border:1px solid;border-color:#fff #fff transparent #fff;border-radius:2px 2px 0 0"></div>
<div style="left:48px;top:21px;width:51px;height:21px;background:#f0f0f0;border:1px solid;border-color:#fff #6a6a6a transparent #fff;box-shadow:1px 0 0 #404040;border-radius:2px 2px 0 0"></div>
<div style="left:101px;top:23px;width:45px;height:18px;border:1px solid;border-color:#fff #6a6a6a transparent #fff;box-shadow:1px 0 0 #404040;border-radius:2px 2px 0 0"></div>
<div style="left:148px;top:23px;width:39px;height:18px;border:1px solid;border-color:#fff #6a6a6a transparent #fff;box-shadow:1px 0 0 #404040;border-radius:2px 2px 0 0"></div>
<span style="left:7px;top:25px;font-size:11.500px;line-height:14px;letter-spacing:-.35px">Общее</span>
<span style="left:54px;top:23px;font-size:11.500px;line-height:14px;letter-spacing:-.35px">Скрипт</span>
<span style="left:103px;top:25px;font-size:11.500px;line-height:14px;letter-spacing:-.35px">Разное</span>
<span style="left:151px;top:25px;font-size:11.500px;line-height:14px;letter-spacing:-.35px">Ещё</span>
<span style="left:17px;top:46px;font-size:11.500px;line-height:14px;letter-spacing:-.4px">68100</span>
<div class="edit" style="left:61px;top:45px;width:116px;height:15px"></div>
<span style="left:63px;top:46px;font-size:12px;line-height:14px;letter-spacing:-.55px">MKSWindow#8</span>
<div class="btn" style="left:181px;top:45px;width:29px;height:16px;line-height:13px">log</div>
<div class="cb" style="left:212px;top:46px"></div>
<div class="btn" style="left:228px;top:45px;width:18px;height:16px;line-height:13px">F</div>
<div class="cb" style="left:7px;top:67px"></div>
<div class="btn" style="left:23px;top:65px;width:49px;height:18px;line-height:16px;letter-spacing:-.5px">366, 211</div>
<div class="btn" style="left:77px;top:65px;width:49px;height:18px;line-height:16px;letter-spacing:-.5px">391, 304</div>
<div class="cb" style="left:129px;top:67px"></div>
<div style="left:156px;top:66px;width:72px;height:15px;border:1px solid;border-color:#6a6a6a #fff #fff #6a6a6a;box-shadow:inset 1px 1px 0 #a0a0a0;background:#f7f7f7;text-align:center;font-size:12px;line-height:15px;letter-spacing:-.4px">Слежение</div>
<div class="cb" style="left:7px;top:88px"></div>
<svg style="left:9px;top:90px;width:9px;height:9px" viewBox="0 0 9 9"><path d="M1 4l2.500 2.500L8 1.500" fill="none" stroke="#000" stroke-width="1.800"/></svg>
<div style="left:24px;top:85px;width:48px;height:19px;background:#fff"></div>
<div style="left:48px;top:85px;width:24px;height:19px;border:3px solid #000;border-left:none;border-right-width:5px;background:#fff"></div>
<div class="btn" style="left:76px;top:86px;width:66px;height:18px;line-height:16px;letter-spacing:-.5px">16777215</div>
<div class="edit" style="left:145px;top:85px;width:66px;height:19px"></div>
<div class="btn" style="left:194px;top:87px;width:16px;height:16px"></div>
<svg style="left:198px;top:93px;width:7px;height:4px" viewBox="0 0 7 4"><path d="M0 0h7L3.500 4z" fill="#000"/></svg>
<svg style="left:216px;top:94px;width:10px;height:5px" viewBox="0 0 10 5"><path d="M0 0h10L5 5z" fill="#000"/></svg>
<div style="left:4px;top:105px;width:378px;height:565px;border:1px solid;border-color:#808080 #fff #fff #808080;box-shadow:inset 1px 1px 0 #404040;background:#fff"></div>
<div style="left:6px;top:107px;width:16px;height:544px;background:#f0f0f0;border-right:1px solid #f8f8f8"></div>
<span style="left:13px;top:109px;font-family:'Liberation Mono',monospace;font-size:10.500px;line-height:15px;color:#111">0</span>
<span class="code" style="left:26px;top:109px">--lua</span>
<span style="left:13px;top:125px;font-family:'Liberation Mono',monospace;font-size:10.500px;line-height:15px;color:#111">1</span>
<span class="code" style="left:26px;top:125px">::start::</span>
<span style="left:13px;top:141px;font-family:'Liberation Mono',monospace;font-size:10.500px;line-height:15px;color:#111">2</span>
<span class="code" style="left:26px;top:141px">wait <em>("<i>5</i>s")</em></span>
<span style="left:13px;top:157px;font-family:'Liberation Mono',monospace;font-size:10.500px;line-height:15px;color:#111">3</span>
<span class="code" style="left:26px;top:157px">send217 <em>("q", <i>2000</i>)</em></span>
<span style="left:13px;top:173px;font-family:'Liberation Mono',monospace;font-size:10.500px;line-height:15px;color:#111">4</span>
<span class="code" style="left:26px;top:173px">goto start</span>
<div style="left:364px;top:107px;width:17px;height:544px;background:#f0f0f0"></div>
<svg style="left:369px;top:113px;width:7px;height:4px" viewBox="0 0 7 4"><path d="M0 4h7L3.500 0z" fill="#9a9a9a"/></svg>
<svg style="left:369px;top:641px;width:7px;height:4px" viewBox="0 0 7 4"><path d="M0 0h7L3.500 4z" fill="#9a9a9a"/></svg>
<div style="left:6px;top:651px;width:375px;height:18px;background:#f0f0f0"></div>
<svg style="left:12px;top:656px;width:5px;height:8px" viewBox="0 0 5 8"><path d="M5 0v8L0 4z" fill="#333"/></svg>
<div style="left:24px;top:653px;width:15px;height:14px;border:1px solid #9a9a9a;border-radius:2px;background:linear-gradient(#f4f4f4 0,#e9e9e9 50%,#d2d2d2 51%,#dcdcdc 100%)"></div>
<div class="edit" style="left:342px;top:659px;width:40px;height:11px;box-shadow:none"></div>
<span style="left:373px;top:658px;font-size:11.500px;line-height:12px">4</span>
<div style="left:4px;top:672px;width:378px;height:5px;background:#fff;border:1px solid #000;border-bottom-width:1.500px"></div>
<div style="left:4px;top:672px;width:75px;height:5px;background:#000"></div>
<div style="left:6px;top:680px;width:23px;height:22px;border-left:1px solid #fff;border-right:1px solid #8c8c8c;box-shadow:1px 0 0 #dcdcdc"></div>
<span style="left:1px;top:680px;width:30px;text-align:center;font-size:14px;font-weight:bold;line-height:15px;letter-spacing:-.5px">0</span>
<div style="left:8px;top:695px;width:8px;height:6px;background:#22cc00"></div>
<div style="left:19px;top:695px;width:8px;height:6px;background:#dd0000"></div>
<div style="left:29px;top:680px;width:23px;height:22px;border-left:1px solid #fff;border-right:1px solid #8c8c8c;box-shadow:1px 0 0 #dcdcdc"></div>
<span style="left:24px;top:680px;width:30px;text-align:center;font-size:14px;font-weight:bold;line-height:15px;letter-spacing:-.5px">1</span>
<div style="left:31px;top:695px;width:8px;height:6px;background:#22cc00"></div>
<div style="left:42px;top:695px;width:8px;height:6px;background:#dd0000"></div>
<div style="left:52px;top:680px;width:23px;height:22px;border-left:1px solid #fff;border-right:1px solid #8c8c8c;box-shadow:1px 0 0 #dcdcdc"></div>
<span style="left:47px;top:680px;width:30px;text-align:center;font-size:14px;font-weight:bold;line-height:15px;letter-spacing:-.5px">2</span>
<div style="left:54px;top:695px;width:8px;height:6px;background:#22cc00"></div>
<div style="left:65px;top:695px;width:8px;height:6px;background:#dd0000"></div>
<div style="left:75px;top:680px;width:23px;height:22px;border-left:1px solid #fff;border-right:1px solid #8c8c8c;box-shadow:1px 0 0 #dcdcdc"></div>
<span style="left:70px;top:680px;width:30px;text-align:center;font-size:14px;font-weight:bold;line-height:15px;letter-spacing:-.5px">3</span>
<div style="left:77px;top:695px;width:8px;height:6px;background:#22cc00"></div>
<div style="left:88px;top:695px;width:8px;height:6px;background:#dd0000"></div>
<div style="left:98px;top:680px;width:23px;height:22px;border-left:1px solid #fff;border-right:1px solid #8c8c8c;box-shadow:1px 0 0 #dcdcdc"></div>
<span style="left:93px;top:680px;width:30px;text-align:center;font-size:14px;font-weight:bold;line-height:15px;letter-spacing:-.5px">4</span>
<div style="left:100px;top:695px;width:8px;height:6px;background:#22cc00"></div>
<div style="left:111px;top:695px;width:8px;height:6px;background:#dd0000"></div>
<div style="left:121px;top:680px;width:23px;height:22px;border-left:1px solid #fff;border-right:1px solid #8c8c8c;box-shadow:1px 0 0 #dcdcdc"></div>
<span style="left:116px;top:680px;width:30px;text-align:center;font-size:14px;font-weight:bold;line-height:15px;letter-spacing:-.5px">5</span>
<div style="left:123px;top:695px;width:8px;height:6px;background:#22cc00"></div>
<div style="left:134px;top:695px;width:8px;height:6px;background:#dd0000"></div>
<div style="left:144px;top:680px;width:23px;height:22px;border-left:1px solid #fff;border-right:1px solid #8c8c8c;box-shadow:1px 0 0 #dcdcdc"></div>
<span style="left:139px;top:680px;width:30px;text-align:center;font-size:14px;font-weight:bold;line-height:15px;letter-spacing:-.5px">6</span>
<div style="left:146px;top:695px;width:8px;height:6px;background:#22cc00"></div>
<div style="left:157px;top:695px;width:8px;height:6px;background:#dd0000"></div>
<div style="left:167px;top:680px;width:23px;height:22px;border-left:1px solid #fff;border-right:1px solid #8c8c8c;box-shadow:1px 0 0 #dcdcdc"></div>
<span style="left:162px;top:680px;width:30px;text-align:center;font-size:14px;font-weight:bold;line-height:15px;letter-spacing:-.5px">7</span>
<div style="left:169px;top:695px;width:8px;height:6px;background:#22cc00"></div>
<div style="left:180px;top:695px;width:8px;height:6px;background:#dd0000"></div>
<div style="left:190px;top:680px;width:23px;height:22px;border-left:1px solid #fff;border-right:1px solid #8c8c8c;box-shadow:1px 0 0 #dcdcdc"></div>
<span style="left:185px;top:680px;width:30px;text-align:center;font-size:14px;font-weight:bold;line-height:15px;letter-spacing:-.5px">8</span>
<div style="left:192px;top:695px;width:8px;height:6px;background:#22cc00"></div>
<div style="left:203px;top:695px;width:8px;height:6px;background:#dd0000"></div>
<div style="left:213px;top:680px;width:23px;height:22px;border-left:1px solid #fff;border-right:1px solid #8c8c8c;box-shadow:1px 0 0 #dcdcdc"></div>
<span style="left:208px;top:680px;width:30px;text-align:center;font-size:14px;font-weight:bold;line-height:15px;letter-spacing:-.5px">9</span>
<div style="left:215px;top:695px;width:8px;height:6px;background:#22cc00"></div>
<div style="left:226px;top:695px;width:8px;height:6px;background:#dd0000"></div>
<div style="left:236px;top:680px;width:23px;height:22px;border-left:1px solid #fff;border-right:1px solid #8c8c8c;box-shadow:1px 0 0 #dcdcdc"></div>
<span style="left:231px;top:680px;width:30px;text-align:center;font-size:14px;font-weight:bold;line-height:15px;letter-spacing:-.5px">10</span>
<div style="left:238px;top:695px;width:8px;height:6px;background:#22cc00"></div>
<div style="left:249px;top:695px;width:8px;height:6px;background:#dd0000"></div>
<div style="left:259px;top:680px;width:23px;height:22px;border-left:1px solid #fff;border-right:1px solid #8c8c8c;box-shadow:1px 0 0 #dcdcdc"></div>
<span style="left:254px;top:680px;width:30px;text-align:center;font-size:14px;font-weight:bold;line-height:15px;letter-spacing:-.5px">11</span>
<div style="left:261px;top:695px;width:8px;height:6px;background:#22cc00"></div>
<div style="left:272px;top:695px;width:8px;height:6px;background:#dd0000"></div>
<div style="left:282px;top:680px;width:23px;height:22px;border-left:1px solid #fff;border-right:1px solid #8c8c8c;box-shadow:1px 0 0 #dcdcdc"></div>
<span style="left:277px;top:680px;width:30px;text-align:center;font-size:14px;font-weight:bold;line-height:15px;letter-spacing:-.5px">12</span>
<div style="left:284px;top:695px;width:8px;height:6px;background:#22cc00"></div>
<div style="left:295px;top:695px;width:8px;height:6px;background:#dd0000"></div>
<div style="left:305px;top:680px;width:23px;height:22px;border-left:1px solid #fff;border-right:1px solid #8c8c8c;box-shadow:1px 0 0 #dcdcdc"></div>
<span style="left:300px;top:680px;width:30px;text-align:center;font-size:14px;font-weight:bold;line-height:15px;letter-spacing:-.5px">13</span>
<div style="left:307px;top:695px;width:8px;height:6px;background:#22cc00"></div>
<div style="left:318px;top:695px;width:8px;height:6px;background:#dd0000"></div>
<div style="left:328px;top:680px;width:23px;height:22px;border-left:1px solid #fff;border-right:1px solid #8c8c8c;box-shadow:1px 0 0 #dcdcdc"></div>
<span style="left:323px;top:680px;width:30px;text-align:center;font-size:14px;font-weight:bold;line-height:15px;letter-spacing:-.5px">14</span>
<div style="left:330px;top:695px;width:8px;height:6px;background:#22cc00"></div>
<div style="left:341px;top:695px;width:8px;height:6px;background:#dd0000"></div>
<div style="left:342px;top:678px;width:44px;height:25px;background:#f0f0f0"></div>
<div class="btn" style="left:342px;top:679px;width:20px;height:20px"></div>
<div class="btn" style="left:362px;top:679px;width:20px;height:20px"></div>
<svg style="left:348px;top:684px;width:5px;height:9px" viewBox="0 0 5 9"><path d="M5 0v9L0 4.500z" fill="#000"/></svg>
<svg style="left:370px;top:684px;width:5px;height:9px" viewBox="0 0 5 9"><path d="M0 0v9l5-4.500z" fill="#000"/></svg>
<div style="left:5px;top:702px;width:377px;height:27px;border:1px solid;border-color:#fff #6a6a6a #6a6a6a #fff;box-shadow:1px 1px 0 #fff"></div>
<div class="btn" style="left:9px;top:705px;width:20px;height:20px;font-size:15px;font-weight:bold;line-height:17px">+</div>
<div class="btn" style="left:33px;top:705px;width:20px;height:20px;font-size:14px;line-height:16px">–</div>
<div class="edit" style="left:60px;top:707px;width:40px;height:17px"></div>
<span style="left:63px;top:709px;font-size:12px;line-height:14px;letter-spacing:-.5px">100</span>
<span style="left:104px;top:712px;font-size:11px;line-height:13px;letter-spacing:-.3px">ms</span>
<div class="cb" style="left:124px;top:710px"></div>
<div class="btn" style="left:141px;top:705px;width:38px;height:20px"></div>
<div style="left:149px;top:709px;width:21px;height:12px;background:#c0c0c0;border:1px solid #9a9a9a"></div>
<span style="left:156px;top:707px;font-size:9px;font-weight:bold;line-height:12px;color:#e8e8e8">ıı</span>
<div class="btn" style="left:181px;top:705px;width:38px;height:20px"></div>
<div style="left:189px;top:708px;width:23px;height:14px;background:#c0c0c0;border:1px solid #000;border-width:1px 1px 2px 2px"></div>
<svg style="left:195px;top:711px;width:9px;height:8px" viewBox="0 0 9 8"><path d="M0 0v8l9-4z" fill="#000"/></svg>
</div>
</div>
</body></html>
